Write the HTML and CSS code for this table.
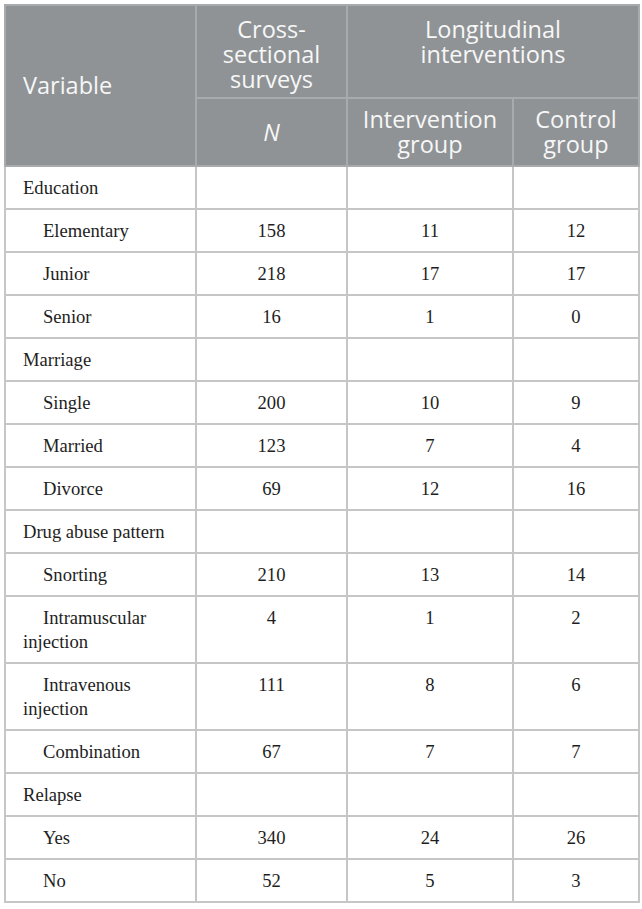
FILE: index.html
```html
<!DOCTYPE html>
<html lang="en">
<head>
    <meta charset="UTF-8">
    <meta name="viewport" content="width=device-width, initial-scale=1.0">
    <title>Sample characteristics</title>
    <link rel="stylesheet" href="styles.css">
</head>
<body>
<table class="data-table">
    <colgroup>
        <col class="col-var">
        <col class="col-n">
        <col class="col-int">
        <col class="col-ctl">
    </colgroup>
    <thead>
        <tr>
            <th rowspan="2" class="th-var">Variable</th>
            <th class="th-top">Cross-<br>sectional<br>surveys</th>
            <th colspan="2" class="th-top">Longitudinal<br>interventions</th>
        </tr>
        <tr>
            <th><i>N</i></th>
            <th>Intervention<br>group</th>
            <th>Control<br>group</th>
        </tr>
    </thead>
    <tbody>
        <tr><td class="cat">Education</td><td></td><td></td><td></td></tr>
        <tr><td class="sub">Elementary</td><td>158</td><td>11</td><td>12</td></tr>
        <tr><td class="sub">Junior</td><td>218</td><td>17</td><td>17</td></tr>
        <tr><td class="sub">Senior</td><td>16</td><td>1</td><td>0</td></tr>
        <tr><td class="cat">Marriage</td><td></td><td></td><td></td></tr>
        <tr><td class="sub">Single</td><td>200</td><td>10</td><td>9</td></tr>
        <tr><td class="sub">Married</td><td>123</td><td>7</td><td>4</td></tr>
        <tr><td class="sub">Divorce</td><td>69</td><td>12</td><td>16</td></tr>
        <tr><td class="cat">Drug abuse pattern</td><td></td><td></td><td></td></tr>
        <tr><td class="sub">Snorting</td><td>210</td><td>13</td><td>14</td></tr>
        <tr><td class="sub">Intramuscular injection</td><td>4</td><td>1</td><td>2</td></tr>
        <tr><td class="sub">Intravenous injection</td><td>111</td><td>8</td><td>6</td></tr>
        <tr><td class="sub">Combination</td><td>67</td><td>7</td><td>7</td></tr>
        <tr><td class="cat">Relapse</td><td></td><td></td><td></td></tr>
        <tr><td class="sub">Yes</td><td>340</td><td>24</td><td>26</td></tr>
        <tr><td class="sub">No</td><td>52</td><td>5</td><td>3</td></tr>
    </tbody>
</table>
</body>
</html>
```

FILE: styles.css
```css
body {
    margin: 0;
    padding: 4px;
    background: #fff;
}
.data-table {
    width: 634px;
    border-collapse: collapse;
    border: 2px solid #b3c4bd;
    table-layout: fixed;
}
.col-var { width: 191px; }
.col-n { width: 151px; }
.col-int { width: 166px; }
.col-ctl { width: 126px; }

.data-table th {
    background: #8f9396;
    color: #f7f7f7;
    font-family: "Open Sans", Lato, sans-serif;
    font-weight: 400;
    font-size: 23.5px;
    line-height: 25px;
    padding: 8px 4px 8px;
    border: 2px solid #a8abad;
    text-align: center;
    vertical-align: middle;
}
.data-table th.th-top {
    vertical-align: top;
    padding-top: 11px;
    padding-bottom: 5px;
}
.data-table th.th-var {
    text-align: left;
    padding-left: 17px;
}
.data-table th i { font-style: italic; }

.data-table td {
    font-family: "Liberation Serif", "Times New Roman", serif;
    font-size: 18.6px;
    line-height: 24px;
    color: #1e1e1e;
    padding: 9px 6px 8px;
    border: 2px solid #c6c6c6;
    text-align: center;
    vertical-align: top;
}
.data-table td.cat,
.data-table td.sub {
    text-align: left;
    padding-left: 17px;
}
.data-table td.sub { text-indent: 20px; }
```
